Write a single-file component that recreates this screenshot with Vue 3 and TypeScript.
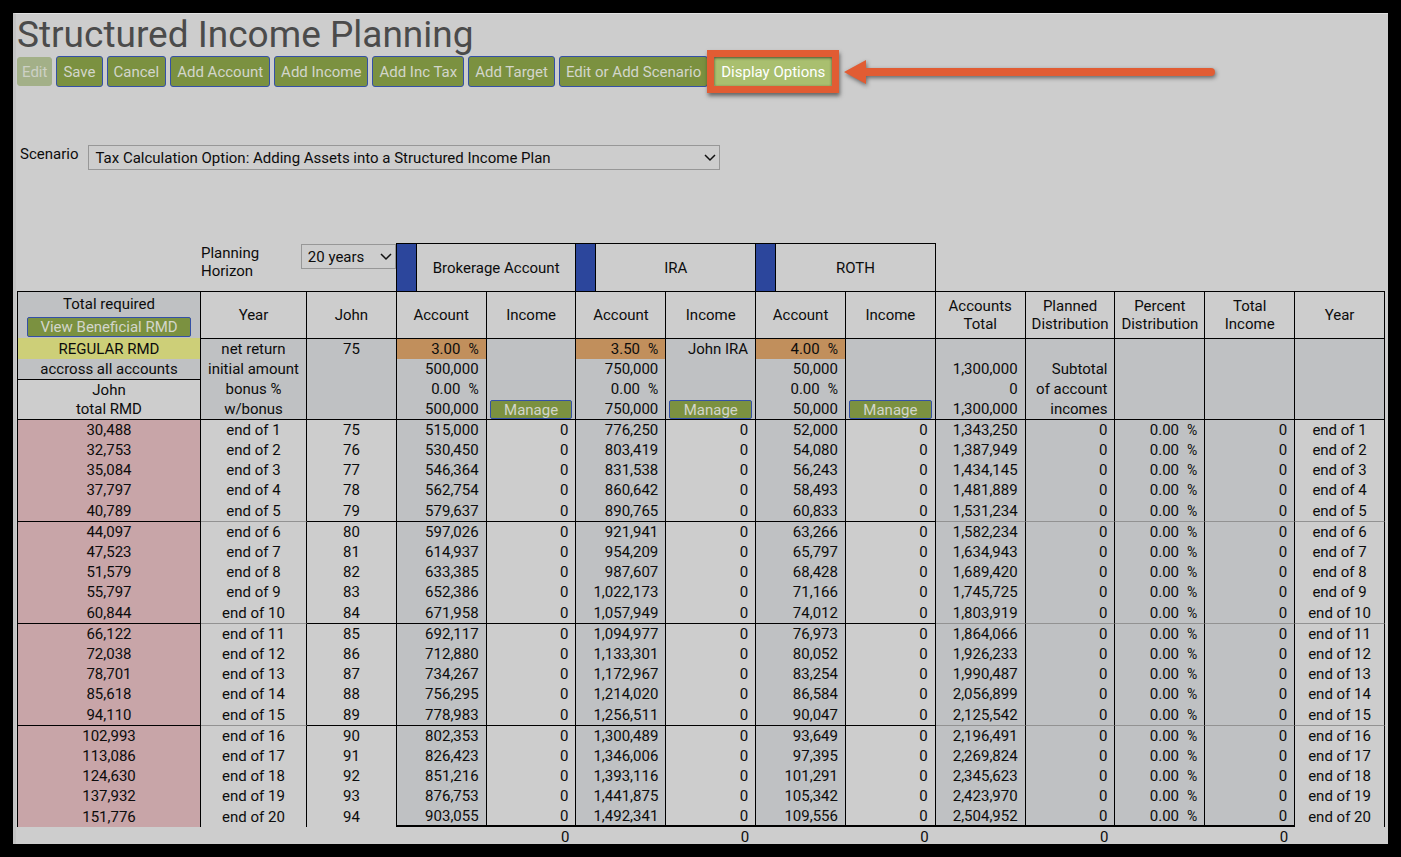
<script setup lang="ts">
import { ref } from 'vue'

interface Account {
  name: string
  rate: string
  initial: string
  owner: string
  values: string[]
}

interface PlanRow {
  year: number
  age: number
  rmd: string
  total: string
}

const actions = ['Save', 'Cancel', 'Add Account', 'Add Income', 'Add Inc Tax', 'Add Target', 'Edit or Add Scenario']

const scenario = ref('Tax Calculation Option: Adding Assets into a Structured Income Plan')
const horizon = ref('20 years')

const accounts: Account[] = [
  {
    name: 'Brokerage Account',
    rate: '3.00',
    initial: '500,000',
    owner: '',
    values: [
      '515,000', '530,450', '546,364', '562,754', '579,637',
      '597,026', '614,937', '633,385', '652,386', '671,958',
      '692,117', '712,880', '734,267', '756,295', '778,983',
      '802,353', '826,423', '851,216', '876,753', '903,055',
    ],
  },
  {
    name: 'IRA',
    rate: '3.50',
    initial: '750,000',
    owner: 'John IRA',
    values: [
      '776,250', '803,419', '831,538', '860,642', '890,765',
      '921,941', '954,209', '987,607', '1,022,173', '1,057,949',
      '1,094,977', '1,133,301', '1,172,967', '1,214,020', '1,256,511',
      '1,300,489', '1,346,006', '1,393,116', '1,441,875', '1,492,341',
    ],
  },
  {
    name: 'ROTH',
    rate: '4.00',
    initial: '50,000',
    owner: '',
    values: [
      '52,000', '54,080', '56,243', '58,493', '60,833',
      '63,266', '65,797', '68,428', '71,166', '74,012',
      '76,973', '80,052', '83,254', '86,584', '90,047',
      '93,649', '97,395', '101,291', '105,342', '109,556',
    ],
  },
]

const rmds = [
  '30,488', '32,753', '35,084', '37,797', '40,789',
  '44,097', '47,523', '51,579', '55,797', '60,844',
  '66,122', '72,038', '78,701', '85,618', '94,110',
  '102,993', '113,086', '124,630', '137,932', '151,776',
]

const totals = [
  '1,343,250', '1,387,949', '1,434,145', '1,481,889', '1,531,234',
  '1,582,234', '1,634,943', '1,689,420', '1,745,725', '1,803,919',
  '1,864,066', '1,926,233', '1,990,487', '2,056,899', '2,125,542',
  '2,196,491', '2,269,824', '2,345,623', '2,423,970', '2,504,952',
]

const rows: PlanRow[] = rmds.map((rmd, i) => ({ year: i + 1, age: 75 + i, rmd, total: totals[i] }))
const groups: PlanRow[][] = [0, 5, 10, 15].map((start) => rows.slice(start, start + 5))
</script>

<template>
  <main class="panel">
    <h1>Structured Income Planning</h1>

    <div class="toolbar">
      <button type="button" class="btn btn-disabled" disabled>Edit</button>
      <button v-for="action in actions" :key="action" type="button" class="btn">{{ action }}</button>
      <span class="callout">
        <button type="button" class="btn btn-active">Display Options</button>
      </span>
      <svg class="arrow" viewBox="0 0 371 24" width="371" height="24" aria-hidden="true">
        <path d="M0 12 22 0V8H367A4 4 0 0 1 367 16H22V24Z" fill="#e15c33" />
      </svg>
    </div>

    <div class="scenario">
      <label for="scenario">Scenario</label>
      <span class="select scenario-select">
        <select id="scenario" v-model="scenario">
          <option>Tax Calculation Option: Adding Assets into a Structured Income Plan</option>
        </select>
        <svg viewBox="0 0 12 8" width="12" height="8" aria-hidden="true"><path d="M1 1 6 6 11 1" /></svg>
      </span>
    </div>

    <table>
      <colgroup>
        <col class="col-rmd" />
        <col class="col-year" />
        <col v-for="n in 12" :key="n" />
      </colgroup>
      <thead>
        <tr class="names">
          <td></td>
          <td colspan="2" class="horizon-cell">
            <div class="horizon">
              <label for="horizon">Planning Horizon</label>
              <span class="select">
                <select id="horizon" v-model="horizon">
                  <option>20 years</option>
                </select>
                <svg viewBox="0 0 12 8" width="12" height="8" aria-hidden="true"><path d="M1 1 6 6 11 1" /></svg>
              </span>
            </div>
          </td>
          <th v-for="account in accounts" :key="account.name" colspan="2" class="account-name">
            <div><span class="tab"></span><span class="name">{{ account.name }}</span></div>
          </th>
          <td colspan="5"></td>
        </tr>
        <tr class="heads">
          <th class="first shade">
            <span class="required">Total required</span>
            <button type="button" class="btn btn-small">View Beneficial RMD</button>
          </th>
          <th>Year</th>
          <th>John</th>
          <template v-for="account in accounts" :key="account.name">
            <th>Account</th>
            <th>Income</th>
          </template>
          <th>Accounts<br />Total</th>
          <th>Planned<br />Distribution</th>
          <th>Percent<br />Distribution</th>
          <th>Total<br />Income</th>
          <th>Year</th>
        </tr>
      </thead>
      <tbody class="setup">
        <tr>
          <td class="first regular">REGULAR RMD</td>
          <td class="shade">net return</td>
          <td class="shade">75</td>
          <template v-for="account in accounts" :key="account.name">
            <td class="num rate">{{ account.rate }}<span class="pct">%</span></td>
            <td class="num shade">{{ account.owner }}</td>
          </template>
          <td v-for="n in 5" :key="n" class="shade"></td>
        </tr>
        <tr>
          <td class="first shade">accross all accounts</td>
          <td class="shade">initial amount</td>
          <td class="shade"></td>
          <template v-for="account in accounts" :key="account.name">
            <td class="num shade">{{ account.initial }}</td>
            <td class="shade"></td>
          </template>
          <td class="num shade">1,300,000</td>
          <td class="num shade">Subtotal</td>
          <td v-for="n in 3" :key="n" class="shade"></td>
        </tr>
        <tr>
          <td class="first ruled">John</td>
          <td class="shade">bonus %</td>
          <td class="shade"></td>
          <template v-for="account in accounts" :key="account.name">
            <td class="num shade">0.00<span class="pct">%</span></td>
            <td class="shade"></td>
          </template>
          <td class="num shade">0</td>
          <td class="num shade">of account</td>
          <td v-for="n in 3" :key="n" class="shade"></td>
        </tr>
        <tr>
          <td class="first">total RMD</td>
          <td class="shade">w/bonus</td>
          <td class="shade"></td>
          <template v-for="account in accounts" :key="account.name">
            <td class="num shade">{{ account.initial }}</td>
            <td class="shade manage"><button type="button" class="btn btn-small">Manage</button></td>
          </template>
          <td class="num shade">1,300,000</td>
          <td class="num shade">incomes</td>
          <td v-for="n in 3" :key="n" class="shade"></td>
        </tr>
      </tbody>
      <tbody v-for="(group, g) in groups" :key="g" class="years">
        <tr v-for="row in group" :key="row.year">
          <td class="first rmd">{{ row.rmd }}</td>
          <td class="soft">end of {{ row.year }}</td>
          <td>{{ row.age }}</td>
          <template v-for="account in accounts" :key="account.name">
            <td class="num shade sum">{{ account.values[row.year - 1] }}</td>
            <td class="num sum">0</td>
          </template>
          <td class="num shade soft sum">{{ row.total }}</td>
          <td class="num shade soft sum">0</td>
          <td class="num shade soft sum">0.00<span class="pct">%</span></td>
          <td class="num shade soft sum">0</td>
          <td class="soft">end of {{ row.year }}</td>
        </tr>
      </tbody>
      <tfoot>
        <tr>
          <td colspan="3"></td>
          <template v-for="account in accounts" :key="account.name">
            <td></td>
            <td class="num">0</td>
          </template>
          <td></td>
          <td class="num">0</td>
          <td></td>
          <td class="num">0</td>
          <td></td>
        </tr>
      </tfoot>
    </table>
  </main>
</template>

<style>
body {
  background: #000;
}
</style>

<style scoped>
.panel {
  margin: 13px;
  padding: 0 3px 0 1px;
  background: #cdcdcd;
  border-top: 1px solid #e0e0e0;
  border-left: 3px solid #c3c3c3;
  color: #0c0c0c;
  font: 15px/18px Roboto, "Liberation Sans", sans-serif;
}

h1 {
  margin: 0;
  color: #4b4b4b;
  font-size: 37px;
  font-weight: 400;
  line-height: 42px;
}

.toolbar {
  display: flex;
  align-items: center;
  gap: 4px;
}

.btn {
  height: 31px;
  padding: 0 6px;
  border: 1px solid #3450a6;
  border-radius: 3px;
  background: #7b9140;
  color: #d3d6cb;
  font: inherit;
  white-space: nowrap;
}

.btn-disabled {
  height: 29px;
  padding: 0 4px;
  border-color: #a3b088;
  background: #a3b088;
  color: #cdd1c5;
}

.callout {
  position: relative;
  display: flex;
  margin: 0 2px;
}

.callout::after {
  content: "";
  position: absolute;
  inset: -6px -7px;
  border: 7px solid #e15c33;
  box-shadow: 1px 3px 4px rgba(0, 0, 0, 0.5), inset 0 1px 3px rgba(0, 0, 0, 0.6);
  pointer-events: none;
}

.btn-active {
  border-color: #a9bf6f;
  background: #a9bf6f;
  color: #fff;
}

.arrow {
  margin-left: 6px;
  overflow: visible;
  filter: drop-shadow(1px 2px 2px rgba(0, 0, 0, 0.5));
}

.scenario {
  display: flex;
  gap: 10px;
  margin: 58px 0 73px;
  padding-left: 3px;
}

.select {
  position: relative;
  display: block;
}

.scenario-select {
  flex: 1;
  max-width: 632px;
}

.select select {
  display: block;
  width: 100%;
  height: 25px;
  padding: 0 24px 0 6px;
  border: 1px solid #979797;
  border-radius: 0;
  appearance: none;
  background: transparent;
  color: inherit;
  font: inherit;
}

.select svg {
  position: absolute;
  top: 9px;
  right: 4px;
  fill: none;
  stroke: #111;
  stroke-width: 1.5px;
  pointer-events: none;
}

table {
  width: 100%;
  border-collapse: separate;
  border-spacing: 0;
  table-layout: fixed;
}

.col-rmd {
  width: 184px;
}

.col-year {
  width: 106px;
}

th,
td {
  box-sizing: border-box;
  padding: 0;
  font-weight: 400;
  text-align: center;
}

.names > * {
  height: 48px;
}

.horizon-cell {
  padding-top: 1px;
  border-right: 1px solid #000;
  vertical-align: top;
}

.horizon {
  display: flex;
  justify-content: space-between;
  text-align: left;
}

.horizon label {
  width: 80px;
}

.horizon .select {
  width: 95px;
}

.account-name {
  border-top: 1px solid #000;
  border-right: 1px solid #000;
}

.account-name div {
  display: flex;
  height: 47px;
}

.tab {
  width: 19px;
  border-right: 1px solid #000;
  background: #2c469c;
}

.name {
  flex: 1;
  line-height: 49px;
}

.heads th {
  height: 47px;
  border-top: 1px solid #000;
  border-right: 1px solid #000;
}

.heads .first {
  padding-top: 2px;
}

.required {
  display: block;
  margin-bottom: 4px;
}

.btn-small {
  display: block;
  height: 20px;
  border-radius: 2px;
  line-height: 18px;
}

.heads .btn-small {
  width: calc(100% - 18px);
  margin: 0 auto;
}

.setup td,
.years td {
  height: 20px;
  border-right: 1px solid #000;
}

.setup .first,
.years .first,
.heads .first {
  border-left: 1px solid #000;
}

.setup tr:first-child td {
  height: 21px;
}

.setup tr:first-child td:not(.first),
.setup .ruled {
  border-top: 1px solid #000;
}

.years tr:first-child td,
.years tr:last-child td {
  height: 21px;
}

.years tr:first-child td {
  border-top: 1px solid #000;
}

.years:not(.setup + .years) tr:first-child .soft {
  border-top-color: #929292;
}

.years:nth-last-child(2) tr:last-child .sum {
  border-bottom: 2px solid #000;
}

.shade {
  background: #bfc1c3;
}

.regular {
  background: #cdcf78;
}

.rate {
  background: #c18f5c;
}

.rmd {
  background: #c8a5a8;
}

.num {
  padding-right: 7px;
  text-align: right;
}

.pct {
  margin-left: 8px;
  font-size: 14px;
}

.manage .btn-small {
  width: calc(100% - 6px);
  height: 19px;
  margin: 1px auto 0;
}

tfoot td {
  height: 17px;
  padding-top: 3px;
  line-height: 14px;
}
</style>
